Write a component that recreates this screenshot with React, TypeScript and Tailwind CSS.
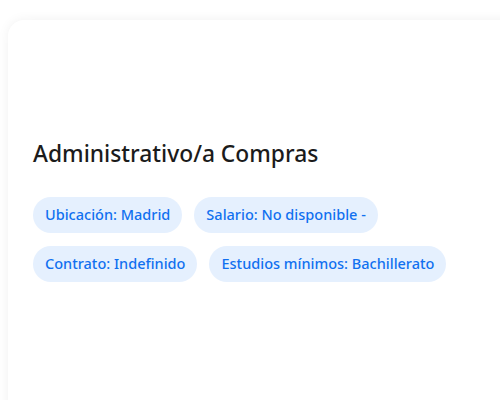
const tags = [
  "Ubicación: Madrid",
  "Salario: No disponible -",
  "Contrato: Indefinido",
  "Estudios mínimos: Bachillerato",
];

export default function App() {
  return (
    <div className="h-[400px] w-[500px] overflow-hidden bg-white pl-2 pt-5 font-['Noto_Sans',sans-serif]">
      <div className="h-[420px] w-[520px] rounded-2xl bg-white px-[25px] pt-[120px] shadow-[0_0_12px_rgba(0,0,0,0.06)]">
        <h1 className="text-[22.8px] font-medium leading-7 text-[#1b1b1b]">Administrativo/a Compras</h1>
        <div className="mt-[29px] flex w-[420px] flex-wrap gap-x-3 gap-y-[13px]">
          {tags.map((t) => (
            <span
              key={t}
              className="flex h-9 items-center rounded-full bg-[#e5f0fe] px-3 text-[14.5px] font-medium text-[#1170f0]"
            >
              {t}
            </span>
          ))}
        </div>
      </div>
    </div>
  );
}
